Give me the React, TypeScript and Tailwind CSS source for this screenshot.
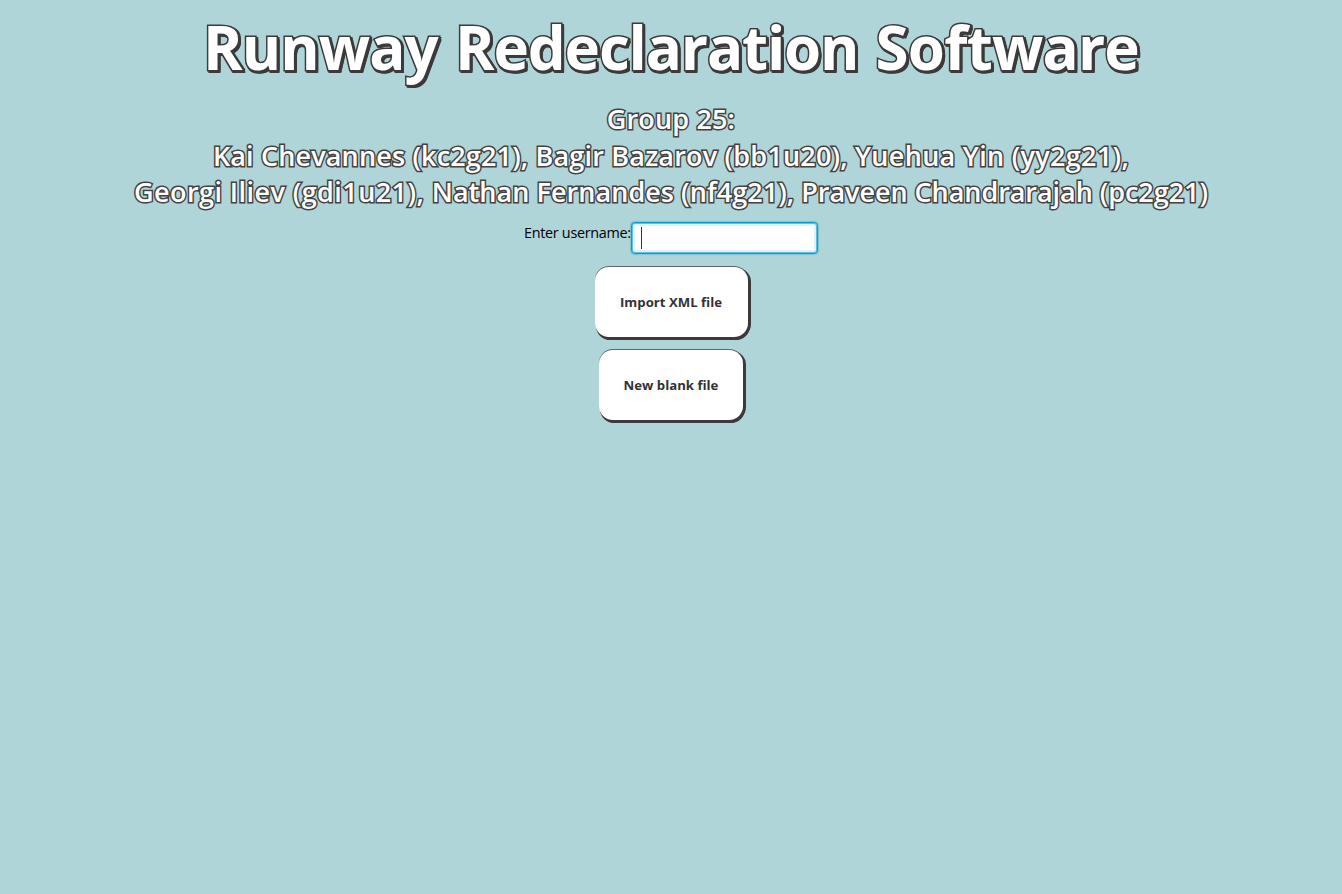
const button =
  "flex h-[70px] items-center justify-center rounded-[14px] bg-white pt-[2px] text-[13.2px] font-bold text-[#333133] [box-shadow:0_-1px_0_#5c6668,1px_0_0_#3c3a3a,1px_1px_0_#3c3a3a,2px_2px_0_#3c3a3a,3px_1px_0_#3c3a3a,1px_3px_0_#3c3a3a,2px_3px_0_#3c3a3a]";

export default function App() {
  return (
    <main className="flex h-[894px] w-[1342px] flex-col items-center overflow-hidden bg-[#afd5d8] font-['Open_Sans',sans-serif]">
      <h1 className="mt-[3px] flex h-[93px] w-[936px] justify-between whitespace-nowrap text-[60px] font-bold leading-[88px] text-white [-webkit-text-stroke:3px_#3c3a3a] [paint-order:stroke_fill] [text-shadow:0px_1px_0_#3c3a3a,0px_3px_0_#3c3a3a,1px_0px_0_#3c3a3a,2px_1px_0_#3c3a3a,3px_0px_0_#3c3a3a,1px_3px_0_#3c3a3a,2px_2px_0_#3c3a3a,3px_2px_0_#3c3a3a,3px_3px_0_#3c3a3a]">
        <span className="tracking-[-0.9px]">Runway</span>{" "}
        <span className="tracking-[-1.15px]">Redeclaration</span>{" "}
        <span className="tracking-[-0.8px]">Software</span>
      </h1>
      <h2 className="mt-[5px] flex flex-col items-center whitespace-nowrap text-[27px] font-semibold leading-[36.5px] text-white [-webkit-text-stroke:3px_#444242] [paint-order:stroke_fill]">
        <span className="tracking-[0.15px]">Group 25:</span>
        <span>
          <span className="tracking-[0.15px]">Kai Chevannes (kc2g21), </span>
          <span className="tracking-[0.2px]">Bagir Bazarov (bb1u20), </span>
          <span className="tracking-[0.3px]">Yuehua Yin (yy2g21),</span>
        </span>
        <span>
          <span className="tracking-[0.43px]">Georgi Iliev (gdi1u21), </span>
          <span className="tracking-[0.05px]">Nathan Fernandes (nf4g21), </span>
          <span className="tracking-[-0.05px]">Praveen Chandrarajah (pc2g21)</span>
        </span>
      </h2>
      <div className="mt-[11px] flex items-start text-[14.4px] leading-[22px] text-black">
        <label htmlFor="username" className="w-[107px] whitespace-nowrap tracking-[-0.3px]">Enter username:</label>
        <div className="flex h-[32px] w-[187px] items-center rounded-[4px] border border-[#039ed3] bg-white pl-[9px] [box-shadow:0_0_2px_#039ed3,inset_0_0_0_1px_#5fc0e2,inset_0_0_0_3px_#e0f2f9]">
          <div id="username" className="h-[22px] w-px bg-[#333]" />
        </div>
      </div>
      <button className={`${button} mt-[13px] w-[153px]`}>Import XML file</button>
      <button className={`${button} mt-[13px] w-[144px]`}>New blank file</button>
    </main>
  );
}
